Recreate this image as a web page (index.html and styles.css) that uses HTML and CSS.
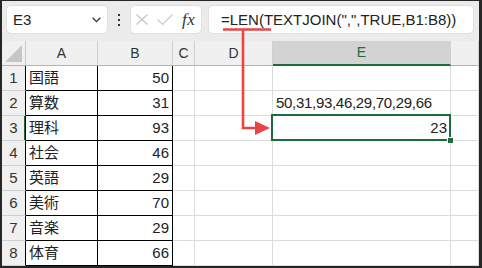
FILE: index.html
```html
<!DOCTYPE html>
<html lang="ja">
<head>
  <meta charset="UTF-8">
  <title>TEXTJOIN LEN</title>
  <link rel="stylesheet" href="styles.css">
</head>
<body>
  <div class="frame">
    <div class="toolbar">
      <div class="namebox">
        <span>E3</span>
        <svg class="chevron" width="9" height="6" viewBox="0 0 9 6"><path d="M0.7 0.8 L4.5 4.6 L8.3 0.8" fill="none" stroke="#333" stroke-width="1.3"/></svg>
      </div>
      <div class="dots"><i></i><i></i><i></i></div>
      <div class="fxbox">
        <svg width="12" height="11" viewBox="0 0 12 11"><path d="M0.5 0.5 L11.5 10.5 M11.5 0.5 L0.5 10.5" stroke="#c4c4c4" stroke-width="1.1"/></svg>
        <svg width="16" height="11" viewBox="0 0 16 11"><path d="M0.5 5.5 L5.5 10.3 L15.5 0.5" fill="none" stroke="#c4c4c4" stroke-width="1.1"/></svg>
        <span class="fx">fx</span>
      </div>
      <div class="formula">=LEN(TEXTJOIN(",",TRUE,B1:B8))</div>
    </div>

    <div class="sheet">
      <div class="corner"><svg width="17" height="17" viewBox="0 0 17 17"><path d="M17 0 L17 17 L0 17 Z" fill="#c6c6c6"/></svg></div>
      <div class="colhead">A</div>
      <div class="colhead">B</div>
      <div class="colhead">C</div>
      <div class="colhead">D</div>
      <div class="colhead active">E</div>
      <div class="colhead"></div>

      <div class="rowhead">1</div>
      <div class="cell boxed">国語</div>
      <div class="cell boxed num">50</div>
      <div class="cell"></div><div class="cell"></div><div class="cell"></div><div class="cell"></div>

      <div class="rowhead">2</div>
      <div class="cell boxed">算数</div>
      <div class="cell boxed num">31</div>
      <div class="cell"></div><div class="cell"></div>
      <div class="cell joined">50,31,93,46,29,70,29,66</div>
      <div class="cell"></div>

      <div class="rowhead active">3</div>
      <div class="cell boxed">理科</div>
      <div class="cell boxed num">93</div>
      <div class="cell"></div><div class="cell"></div>
      <div class="cell num selected">23<span class="handle"></span></div>
      <div class="cell"></div>

      <div class="rowhead">4</div>
      <div class="cell boxed">社会</div>
      <div class="cell boxed num">46</div>
      <div class="cell"></div><div class="cell"></div><div class="cell"></div><div class="cell"></div>

      <div class="rowhead">5</div>
      <div class="cell boxed">英語</div>
      <div class="cell boxed num">29</div>
      <div class="cell"></div><div class="cell"></div><div class="cell"></div><div class="cell"></div>

      <div class="rowhead">6</div>
      <div class="cell boxed">美術</div>
      <div class="cell boxed num">70</div>
      <div class="cell"></div><div class="cell"></div><div class="cell"></div><div class="cell"></div>

      <div class="rowhead">7</div>
      <div class="cell boxed">音楽</div>
      <div class="cell boxed num">29</div>
      <div class="cell"></div><div class="cell"></div><div class="cell"></div><div class="cell"></div>

      <div class="rowhead">8</div>
      <div class="cell boxed">体育</div>
      <div class="cell boxed num">66</div>
      <div class="cell"></div><div class="cell"></div><div class="cell"></div><div class="cell"></div>
    </div>

    <!-- annotation arrow from the formula to E3 -->
    <svg class="callout" width="482" height="268" viewBox="0 0 482 268">
      <path d="M223 29.5 H271 M243 29.5 V128 H258" fill="none" stroke="#e84545" stroke-width="2.6"/>
      <path d="M255 121 L270 128 L255 135 Z" fill="#e84545"/>
    </svg>
  </div>
</body>
</html>
```

FILE: styles.css
```css
html, body {
  margin: 0;
  padding: 0;
  background: #fff;
}

.frame {
  position: relative;
  box-sizing: border-box;
  width: 482px;
  height: 268px;
  overflow: hidden;
  border-style: solid;
  border-color: #262626;
  border-width: 1px 3px 2px 2px;
  font-family: "Liberation Sans", "Noto Sans CJK JP", sans-serif;
  color: #222;
}

/* formula bar */
.toolbar {
  display: flex;
  align-items: flex-start;
  height: 40px;
  box-sizing: border-box;
  padding: 4px 0 0 4px;
  background: #ebebeb;
}

.namebox, .fxbox, .formula {
  box-sizing: border-box;
  height: 29px;
  background: #fff;
  border: 1px solid #e0e0e0;
  border-radius: 5px;
}

.namebox {
  width: 102px;
  display: flex;
  align-items: center;
  justify-content: space-between;
  padding: 0 6px 0 6px;
  font-size: 15px;
}

.chevron {
  margin-top: 1px;
}

.dots {
  width: 22px;
  height: 29px;
  display: flex;
  flex-direction: column;
  align-items: center;
  justify-content: center;
  gap: 3px;
}

.dots i {
  width: 2px;
  height: 2px;
  background: #333;
}

.fxbox {
  width: 72px;
  display: flex;
  align-items: center;
  padding: 0 0 0 5px;
}

.fxbox svg:nth-child(2) {
  margin-left: 9px;
}

.fx {
  margin-left: 9px;
  font-family: "Liberation Serif", serif;
  font-style: italic;
  font-size: 17px;
  color: #333;
  letter-spacing: 0.5px;
}

.formula {
  width: 266px;
  margin-left: 6px;
  padding-left: 12px;
  font-size: 15px;
  line-height: 27px;
  color: #222;
}

/* grid */
.sheet {
  display: grid;
  grid-template-columns: 24px 72px 75px 22px 78px 178px 1fr;
  grid-auto-rows: 25px;
}

.sheet > div {
  box-sizing: border-box;
  border-right: 1px solid #dcdcdc;
  border-bottom: 1px solid #dcdcdc;
}

.corner, .colhead, .rowhead {
  background: #f0f0f0;
  color: #333;
  font-size: 14px;
}

.sheet > .corner {
  display: flex;
  align-items: flex-end;
  justify-content: flex-end;
  padding: 0 3px 3px 0;
  border-right-color: #c8c8c8;
  border-bottom-color: #b4b4b4;
}

.sheet > .colhead {
  text-align: center;
  line-height: 24px;
  border-right-color: #d0d0d0;
  border-bottom-color: #b4b4b4;
}

.sheet > .colhead.active {
  background: #d3d3d3;
  color: #1e6b3d;
  border-bottom: 2px solid #1e6b3d;
  line-height: 23px;
}

.sheet > .rowhead {
  text-align: center;
  line-height: 24px;
  font-size: 15px;
  border-right-color: #000;
  border-bottom-color: #d0d0d0;
}

.sheet > .rowhead.active {
  box-shadow: inset -1px 0 0 #1e6b3d;
}

.cell {
  position: relative;
  font-size: 15px;
  line-height: 24px;
  padding: 0 3px;
  white-space: nowrap;
}

.cell.num {
  text-align: right;
}

.cell.joined {
  letter-spacing: -0.3px;
}

.sheet > .cell.boxed {
  border-right-color: #000;
  border-bottom-color: #000;
}

.selected::after {
  content: "";
  position: absolute;
  left: -2px;
  top: -2px;
  right: -1px;
  bottom: -1px;
  border: 2px solid #1e6b3d;
}

.handle {
  position: absolute;
  right: -4px;
  bottom: -4px;
  width: 5px;
  height: 5px;
  background: #1e6b3d;
  border: 1px solid #fff;
  z-index: 1;
}

.callout {
  position: absolute;
  left: -2px;
  top: -1px;
  pointer-events: none;
}
```
